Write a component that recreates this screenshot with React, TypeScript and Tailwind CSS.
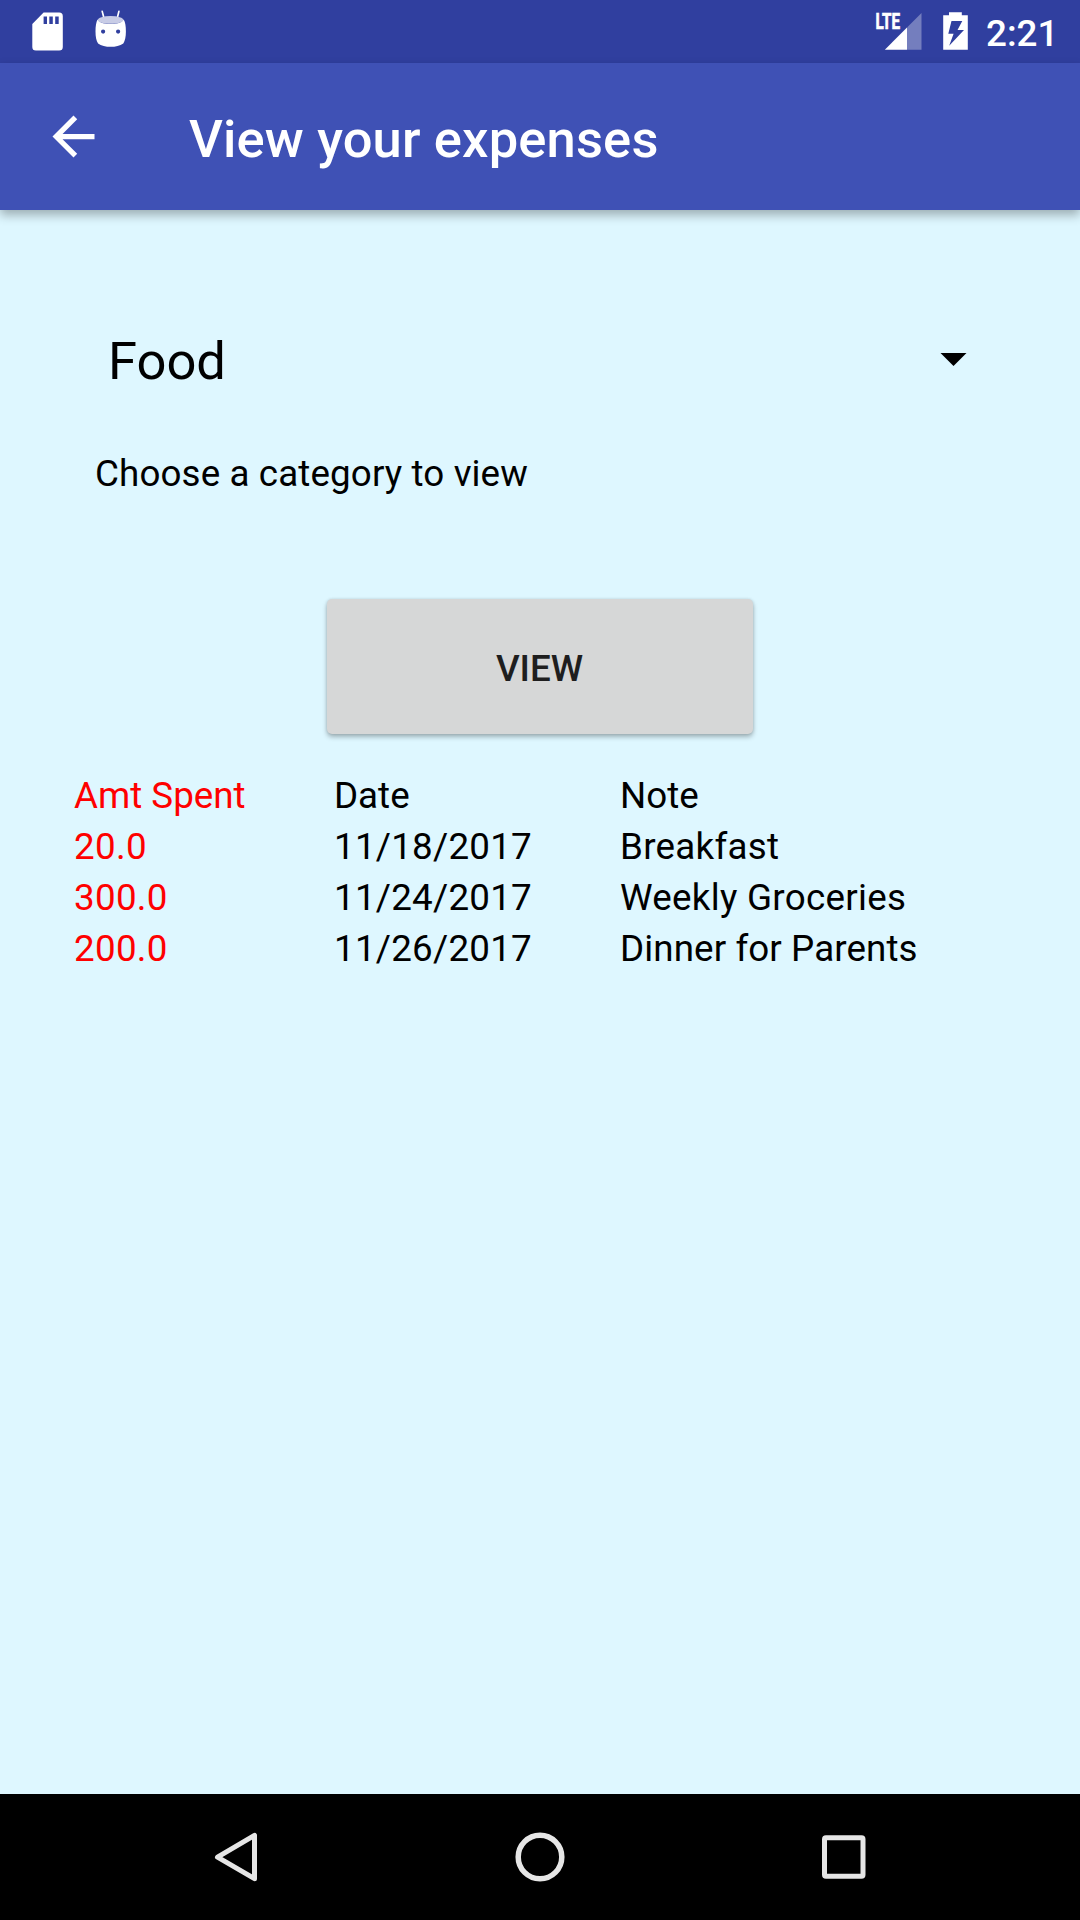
const rows = [
  { amount: "20.0", date: "11/18/2017", note: "Breakfast", noteTracking: "tracking-[0.26px]" },
  { amount: "300.0", date: "11/24/2017", note: "Weekly Groceries", noteTracking: "tracking-[0.28px]" },
  { amount: "200.0", date: "11/26/2017", note: "Dinner for Parents", noteTracking: "tracking-[0.1px]" },
];

function StatusBar() {
  return (
    <div className="flex h-[63px] items-start bg-[#303f9f] pl-[32px] pr-[23px] text-white">
      <svg className="mt-[12px] h-[39px] w-[31px] shrink-0" viewBox="0 0 31 39" fill="currentColor">
        <path
          fillRule="evenodd"
          d="M11.6 .6H27.2A3.6 3.6 0 0 1 30.8 4.2V35A3.6 3.6 0 0 1 27.2 38.6H3.9A3.6 3.6 0 0 1 .3 35V11.9ZM11.6 4.4V12H15V4.4ZM17.3 4.4V12H20.8V4.4ZM23.2 4.4V12H26.7V4.4Z"
        />
      </svg>
      <svg className="ml-[32px] mt-[10px] h-[38px] w-[32px] shrink-0" viewBox="0 0 32 38" fill="currentColor">
        <path d="M7.2 1.4 9 8.3M23.9 1.4 22.2 8.3" stroke="currentColor" strokeWidth="1.7" strokeLinecap="round" />
        <path
          fillRule="evenodd"
          d="M2.5 9.5C5 13.5 11 13.9 15.6 13.9S26.3 13.5 28.7 9.5C30.3 12.5 30.9 16 30.9 21.5S30 30.5 28.3 33.5C25 36 20.5 36.8 15.7 36.8S6 36 3.1 33.5C1.3 30.5 .5 27 .5 21.5S1.2 12.5 2.5 9.5ZM8.1 19.5A2.1 2.1 0 1 0 8.1 23.7 2.1 2.1 0 0 0 8.1 19.5ZM23.1 19.5A2.1 2.1 0 1 0 23.1 23.7 2.1 2.1 0 0 0 23.1 19.5Z"
        />
        <ellipse cx="15.6" cy="9.9" rx="12.8" ry="3.9" fill="#c8cce6" />
      </svg>
      <svg className="ml-auto mt-[4px] h-[47px] w-[50px] shrink-0" viewBox="-4 -8 50 47" fill="currentColor">
        <text
          x="-0.5"
          y="17.3"
          textLength="24.5"
          lengthAdjust="spacingAndGlyphs"
          stroke="currentColor"
          strokeWidth="0.7"
          className="font-[Roboto] text-[22px] font-bold"
        >
          LTE
        </text>
        <path d="M31 15.5 45.5 1V37.7H31Z" opacity=".33" />
        <path d="M31 15.5V37.7H8.8Z" />
      </svg>
      <svg className="ml-[21px] mt-[12px] h-[38px] w-[25px] shrink-0" viewBox="0 0 25 38" fill="currentColor">
        <path
          fillRule="evenodd"
          d="M6 .3H18.8V3.2H24.8V37.8H.2V3.2H6ZM8.5 9H19.3L14.5 18H21L6.2 33.8 10.6 21.8H5.3Z"
        />
      </svg>
      <div className="ml-[18px] mt-[8px] w-[71px] whitespace-nowrap text-[36.75px] font-medium leading-[51px]">2:21</div>
    </div>
  );
}

function AppBar() {
  return (
    <header className="relative flex h-[147px] items-center bg-[#3f51b5] pl-[42px] text-white shadow-[0_5px_10px_rgba(0,0,0,0.3)]">
      <svg className="h-[63px] w-[63px]" viewBox="0 0 24 24" fill="currentColor">
        <path d="M20 11H7.83l5.59-5.59L12 4l-8 8 8 8 1.41-1.41L7.83 13H20v-2z" />
      </svg>
      <h1 className="ml-[84px] mt-[4px] text-[52.5px] font-medium leading-[62px] tracking-[0.15px]">View your expenses</h1>
    </header>
  );
}

function NavigationBar() {
  return (
    <nav className="flex h-[126px] items-center justify-between bg-black px-[205px] text-[#e6e6e6]">
      <svg className="h-[64px] w-[64px]" viewBox="0 0 64 64" fill="none" stroke="currentColor" strokeWidth="5" strokeLinejoin="round">
        <path d="M49.5 10.3V53.7L12.5 32.2Z" />
      </svg>
      <svg className="h-[64px] w-[64px]" viewBox="0 0 64 64" fill="none" stroke="currentColor" strokeWidth="5.5">
        <circle cx="32" cy="32" r="21.8" />
      </svg>
      <svg className="h-[64px] w-[64px]" viewBox="0 0 64 64" fill="none" stroke="currentColor" strokeWidth="5">
        <rect x="13.5" y="12.8" width="38.5" height="38.5" rx="1.5" />
      </svg>
    </nav>
  );
}

export default function App() {
  return (
    <div className="flex h-[1920px] w-[1080px] flex-col overflow-hidden bg-[#def7ff] font-[Roboto,sans-serif] text-black">
      <StatusBar />
      <AppBar />
      <main className="flex flex-1 flex-col">
        <div className="mt-[120px] flex h-[62px] items-center justify-between pl-[108px] pr-[113px]">
          <span className="text-[52.5px] leading-[62px]">Food</span>
          <svg className="mb-[4px] h-[13px] w-[27px]" viewBox="0 0 27 13" fill="currentColor">
            <path d="M.5 0H26.5L13.5 13Z" />
          </svg>
        </div>
        <p className="ml-[95px] mt-[56px] text-[36.75px] leading-[51px] tracking-[0.12px]">Choose a category to view</p>
        <button className="mt-[100px] h-[135px] w-[426px] self-center rounded-[5px] bg-[#d6d7d7] pt-[4px] pr-[1px] text-[36.75px] font-medium text-[#1e1e1e] shadow-[0_3px_5px_rgba(0,0,0,0.28),0_0_3px_rgba(0,0,0,0.12)]">
          VIEW
        </button>
        <table className="ml-[74px] mt-[36px] w-[930px] table-fixed text-left text-[36.75px] leading-[51px]">
          <colgroup>
            <col className="w-[260px]" />
            <col className="w-[286px]" />
            <col />
          </colgroup>
          <thead>
            <tr>
              <th className="font-normal text-[#ff0000]">Amt Spent</th>
              <th className="font-normal">Date</th>
              <th className="font-normal">Note</th>
            </tr>
          </thead>
          <tbody>
            {rows.map((row) => (
              <tr key={row.date}>
                <td className="tracking-[0.3px] text-[#ff0000]">{row.amount}</td>
                <td className="tracking-[0.24px]">{row.date}</td>
                <td className={row.noteTracking}>{row.note}</td>
              </tr>
            ))}
          </tbody>
        </table>
      </main>
      <NavigationBar />
    </div>
  );
}
